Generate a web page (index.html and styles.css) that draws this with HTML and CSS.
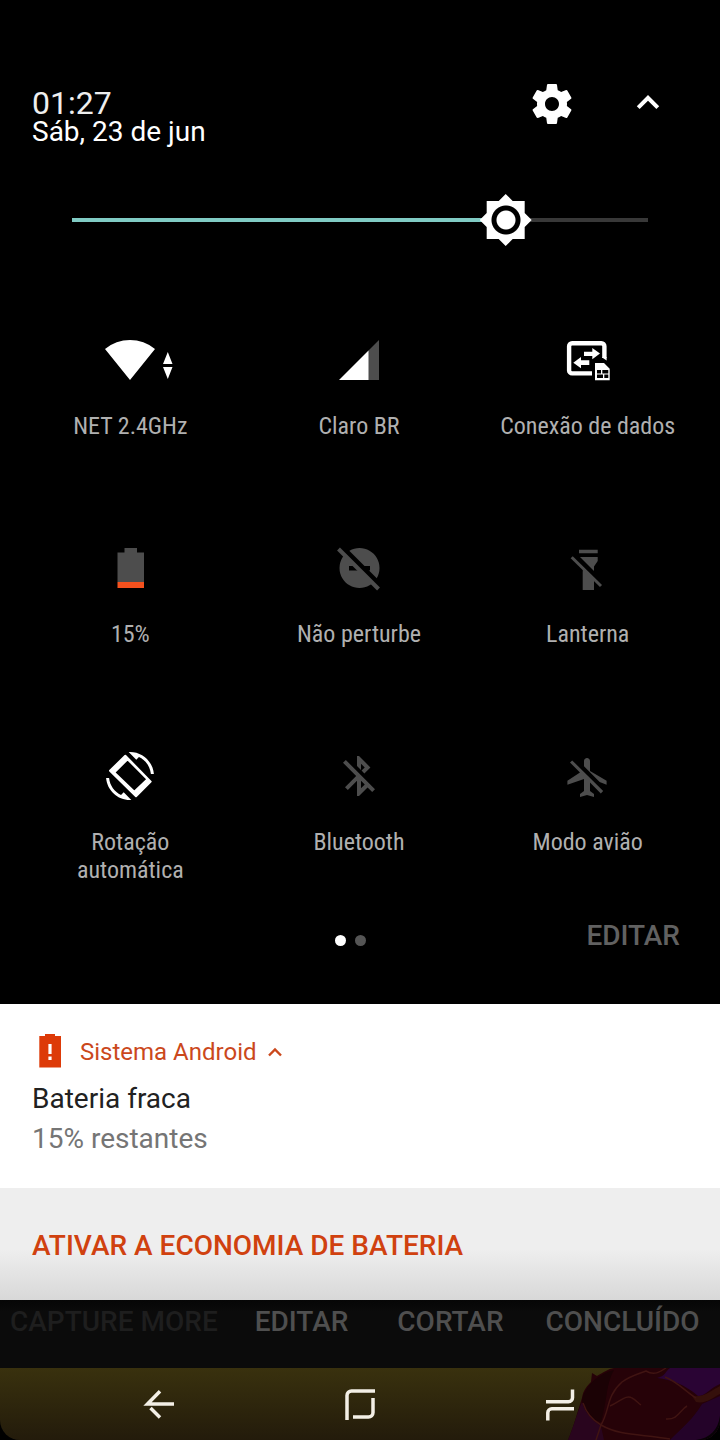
FILE: index.html
```html
<!DOCTYPE html>
<html lang="pt-BR">
<head>
<meta charset="utf-8">
<meta name="viewport" content="width=device-width, initial-scale=1">
<title>Configurações rápidas</title>
<link rel="stylesheet" href="styles.css">
</head>
<body>
<main class="screen">
  <section class="panel">
    <header class="status">
      <div class="clock">
        <time class="time">01:27</time>
        <span class="date">Sáb, 23 de jun</span>
      </div>
      <button class="icon-button" type="button" aria-label="Configurações">
        <svg class="icon" viewBox="0 0 24 24"><path d="M19.43 12.98c.04-.32.07-.64.07-.98s-.03-.66-.07-.98l2.11-1.65c.19-.15.24-.42.12-.64l-2-3.46c-.12-.22-.39-.3-.61-.22l-2.49 1c-.52-.4-1.08-.73-1.69-.98l-.38-2.65C14.46 2.18 14.25 2 14 2h-4c-.25 0-.46.18-.49.42l-.38 2.65c-.61.25-1.17.59-1.69.98l-2.49-1c-.23-.09-.49 0-.61.22l-2 3.46c-.13.22-.07.49.12.64l2.11 1.65c-.04.32-.07.65-.07.98s.03.66.07.98l-2.11 1.65c-.19.15-.24.42-.12.64l2 3.46c.12.22.39.3.61.22l2.49-1c.52.4 1.08.73 1.69.98l.38 2.65c.03.24.24.42.49.42h4c.25 0 .46-.18.49-.42l.38-2.65c.61-.25 1.17-.59 1.69-.98l2.49 1c.23.09.49 0 .61-.22l2-3.46c.12-.22.07-.49-.12-.64l-2.11-1.65zM12 15.5c-1.93 0-3.5-1.57-3.5-3.5s1.57-3.5 3.5-3.5 3.5 1.57 3.5 3.5-1.57 3.5-3.5 3.5z"/></svg>
      </button>
      <button class="icon-button" type="button" aria-label="Recolher">
        <svg class="icon" viewBox="0 0 24 24"><path d="M12 7.500l-5.600 5.600 1.410 1.410L12 10.330l4.190 4.180 1.410-1.410z"/></svg>
      </button>
    </header>

    <input class="brightness" type="range" min="0" max="255" value="192" aria-label="Brilho">

    <div class="tiles">
      <button class="tile" type="button">
        <svg class="icon" viewBox="0 0 48 48"><path d="M24 44L-1 13A39 39 0 0 1 49 13zM61.800 16L66.500 28H57zM57 31H66.500L61.800 43z"/></svg>
        <span>NET 2.4GHz</span>
      </button>
      <button class="tile" type="button">
        <svg class="icon" viewBox="0 0 48 48"><path class="dim" d="M33 15L44 4V44H33z"/><path d="M4 44L33.500 14.500V44z"/></svg>
        <span>Claro BR</span>
      </button>
      <button class="tile" type="button">
        <svg class="icon" viewBox="0 0 48 48"><path d="M28 37.400H8.100a3 3 0 0 1-3-3V10.200a3 3 0 0 1 3-3H37.400a3 3 0 0 1 3 3V22" fill="none" stroke="currentColor" stroke-width="4.400"/><path d="M38.200 21.500L42.600 24.500V21H38.200z"/><path d="M20 15.700H28.300V12L36 17.600 28.300 23.200V20H20zM25.300 24.300H17V21L9.300 26.700 17 32.300V29H25.300z"/><path fill-rule="evenodd" d="M31 27H40L45.700 32.700V44.200H31zM33 34v3.400h4V34zM38.300 34v3.400h6V34zM33 38.600V42h6V38.600zM40.300 38.600V42h4V38.600z"/></svg>
        <span>Conexão de dados</span>
      </button>
      <button class="tile off" type="button">
        <svg class="icon" viewBox="0 0 48 48"><path d="M11.500 8.500H18.500V4H31V8.500H38V38H11.500z"/><path class="low" d="M11.500 38H38V44H11.500z"/></svg>
        <span>15%</span>
      </button>
      <button class="tile off" type="button">
        <svg class="icon" viewBox="0 0 48 48"><path fill-rule="evenodd" d="M24.500 4a20 20 0 1 0 .01 0zM14 22H35V26.400H14z"/><path class="gap" d="M6 2L47 43"/><path class="slash" d="M3.500 5L43.500 45"/></svg>
        <span>Não perturbe</span>
      </button>
      <button class="tile off" type="button">
        <svg class="icon" viewBox="0 0 48 48"><path d="M15 5.700H33.700V9.300H15zM15 13H33.700V17L30 22.500V46H18.700V22.500z"/><path class="gap" d="M9 9.500L41 41.500"/><path d="M6.500 17L9 16 18 25.500 18.700 28V23L12 16.500z" fill="#000"/><path class="slash thin" d="M7.700 13.200L37 42"/></svg>
        <span>Lanterna</span>
      </button>
      <button class="tile wrap" type="button">
        <svg class="icon" viewBox="0 0 48 48"><path d="M32.960 5.040c6.540 3.100 11.220 9.440 11.940 16.960h3C46.880 9.680 36.580 0 24 0l-1.320.06 7.620 7.620zM15.040 42.960C8.500 39.880 3.820 33.520 3.100 26h-3C1.120 38.320 11.420 48 24 48l1.320-.06-7.620-7.620z"/><path fill-rule="evenodd" stroke="currentColor" stroke-width="2" stroke-linejoin="round" d="M19.300 3.700L4 18.800 30 44.300 44.700 29.600zM21.600 7.200L41.500 27.300 28.300 39.700 8.200 20.500z"/></svg>
        <span>Rotação automática</span>
      </button>
      <button class="tile off" type="button">
        <svg class="icon" viewBox="0 0 24 24"><path d="M13 5.830l1.880 1.880-1.600 1.600 1.410 1.410 3.020-3.020L12 2h-1v5.030l2 2v-3.200zM5.410 4L4 5.410 10.590 12 5 17.590 6.410 19 11 14.410V22h1l4.290-4.290 2.300 2.290L20 18.590 5.410 4zM13 18.170v-3.760l1.880 1.880L13 18.170z"/></svg>
        <span>Bluetooth</span>
      </button>
      <button class="tile off" type="button">
        <svg class="icon" viewBox="0 0 24 24"><path d="M13 9.500V4.500c0-.83-.67-1.500-1.500-1.500S10 3.670 10 4.500v2.680l7.830 7.830L21.300 16.400v-2zM3 5.270l4.990 4.990L1.700 14.400v2l8.300-2.900V19.500l-2 1.500V22.500l3.500-1 3.500 1v-1.500L13 19.500v-4.230L18.400 20.700 19.600 19.500 4.100 4.200z"/></svg>
        <span>Modo avião</span>
      </button>
    </div>

    <footer class="panel-footer">
      <div class="dots"><i class="dot current"></i><i class="dot"></i></div>
      <button class="edit" type="button">EDITAR</button>
    </footer>
  </section>

  <article class="notification">
    <div class="source">
      <svg class="source-icon" viewBox="0 0 36 36"><path fill-rule="evenodd" d="M7.300 2H13V0H23V2H29V33.500H7.300zM16.400 10V20H19.600V10zM16.400 22.500V26H19.600V22.500z"/></svg>
      <span>Sistema Android</span>
      <svg class="source-chevron" viewBox="0 0 16 16"><path d="M2 11.500L8 5.500 14 11.500" fill="none" stroke="currentColor" stroke-width="2.400"/></svg>
    </div>
    <h1 class="title">Bateria fraca</h1>
    <p class="detail">15% restantes</p>
  </article>
  <div class="actions">
    <button class="action" type="button">ATIVAR A ECONOMIA DE BATERIA</button>
  </div>

  <div class="toolbar">
    <button class="tool" type="button" disabled>CAPTURE MORE</button>
    <button class="tool edit-tool" type="button">EDITAR</button>
    <button class="tool crop-tool" type="button">CORTAR</button>
    <button class="tool" type="button">CONCLUÍDO</button>
  </div>

  <nav class="navbar">
    <svg class="art" viewBox="0 0 150 72" aria-hidden="true">
      <path fill="#260208" d="M-2 72C4 58 8 42 12 30 13 22 18 17 21 14L22 5 27 8C34 4 38 1 44 0H150V72z"/>
      <path fill="#29051e" d="M-2 72C4 58 8 42 12 34 16 46 22 52 31 58L34 72z"/>
      <path fill="#1b0205" d="M12 32C15 18 28 6 44 2 36 16 38 28 31 54 22 52 14 44 12 32z"/>
      <path fill="#2a0434" d="M87 10C96 8 96 2 100 0H150V16C140 20 136 28 128 28 114 16 102 12 87 10z"/>
      <path fill="#240329" d="M100 72C112 60 124 50 132 36L150 28V72z"/>
      <path fill="#35100b" d="M122 28C134 30 142 22 150 18V26C142 30 136 36 126 34z"/>
      <g fill="none" stroke="#401412" stroke-width="1.500"><path d="M31 57C40 42 36 28 52 14 60 8 68 6 76 3 84 8 90 4 96 0M31 57C50 68 72 66 100 71M13 35C16 44 22 52 31 57L26 72M40 38C50 34 56 26 62 30 66 32 68 35 71 37M117 38C110 42 108 52 96 51M95 9C108 14 116 24 126 30"/></g>
      <path fill="#070305" d="M150 48V72H126C140 70 148 62 150 48z"/>
    </svg>
    <button class="nav-button" type="button" aria-label="Voltar">
      <svg viewBox="0 0 32 32"><path d="M30 16H3.500L16 3.300M6.500 20L16 29.500"/></svg>
    </button>
    <button class="nav-button" type="button" aria-label="Início">
      <svg viewBox="0 0 32 32"><path d="M3 32V7.500a4.500 4.500 0 0 1 4.500-4.500H31M29 10V24.500a4.500 4.500 0 0 1-4.500 4.500H9"/></svg>
    </button>
    <button class="nav-button" type="button" aria-label="Recentes">
      <svg viewBox="0 0 32 32"><path d="M2 13.800H24.500a4 4 0 0 0 4-4V1.500M30 20.800H7.800a4 4 0 0 0-4 4V32.500"/></svg>
    </button>
  </nav>
</main>
</body>
</html>
```
FILE: styles.css
```css
* {
  box-sizing: border-box;
}

body {
  margin: 0;
  background: #000;
  color: #fff;
  font-family: Roboto, "Noto Sans", sans-serif;
}

button {
  margin: 0;
  padding: 0;
  border: 0;
  background: none;
  color: inherit;
  font: inherit;
}

svg {
  display: block;
  overflow: visible;
}

.screen {
  display: flex;
  flex-direction: column;
  min-height: 100vh;
}

.panel {
  display: flex;
  flex-direction: column;
  padding-top: 80px;
}

.status {
  display: flex;
  align-items: flex-start;
  gap: 48px;
  padding: 0 48px 0 32px;
}

.clock {
  display: flex;
  flex: 1;
  flex-direction: column;
  gap: 1px;
  padding-top: 9px;
  line-height: 28px;
}

.time {
  color: #eee;
  font-size: 32px;
}

.date {
  font-size: 28px;
}

.icon {
  width: 48px;
  height: 48px;
  fill: currentColor;
}

/* The control is wider than its line by half a thumb on each side. */
.brightness {
  display: block;
  width: calc(100% - 92px);
  height: 52px;
  margin: 48px 46px 0;
  background: linear-gradient(90deg, #80cbc4 75%, #383838 75%) center / calc(100% - 52px) 4px no-repeat;
  appearance: none;
}

.brightness::-webkit-slider-thumb {
  width: 52px;
  height: 52px;
  background: radial-gradient(circle, #fff 9px, #000 10px, #000 14px, #fff 15px);
  clip-path: polygon(26px 0, 33px 7px, 45px 7px, 45px 19px, 52px 26px, 45px 33px, 45px 45px, 33px 45px, 26px 52px, 19px 45px, 7px 45px, 7px 33px, 0 26px, 7px 19px, 7px 7px, 19px 7px);
  appearance: none;
}

.tiles {
  display: grid;
  grid-template-columns: repeat(3, minmax(0, 1fr));
  row-gap: 104px;
  padding: 90px 18px 0 16px;
}

.tile {
  display: flex;
  flex-direction: column;
  align-items: center;
  gap: 28px;
  font-family: "Roboto Condensed", "Liberation Sans Narrow", Roboto, sans-serif;
  font-size: 24px;
  line-height: 28px;
  white-space: nowrap;
}

.tile.wrap {
  padding: 0 40px;
  white-space: normal;
}

.tile span {
  color: #b0b0b0;
}

.off .icon {
  color: #4d4d4d;
}

.dim {
  fill: #4d4d4d;
}

.low {
  fill: #f4511e;
}

.gap {
  fill: none;
  stroke: #000;
  stroke-width: 5;
}

.slash {
  fill: none;
  stroke: currentColor;
  stroke-width: 4;
}

.thin {
  stroke-width: 3;
}

.panel-footer {
  display: grid;
  grid-template-columns: 1fr auto 1fr;
  align-items: center;
  padding: 36px 40px 44px;
}

.dots {
  display: flex;
  grid-column: 2;
  gap: 9px;
  padding-right: 20px;
}

.dot {
  width: 11px;
  height: 11px;
  border-radius: 50%;
  background: #555;
}

.dot.current {
  background: #fff;
}

.edit {
  justify-self: end;
  padding-bottom: 8px;
  color: #616161;
  font-size: 28px;
  font-weight: 500;
  line-height: 32px;
}

.notification {
  padding: 30px 32px 29px;
  background: #fff;
  color: #212121;
}

.source {
  display: flex;
  align-items: center;
  gap: 12px;
  margin-bottom: 9px;
  color: #cb481c;
  font-size: 24px;
  line-height: 36px;
}

.source-icon {
  width: 36px;
  height: 36px;
  fill: #dd3a08;
}

.source-chevron {
  width: 16px;
  height: 16px;
  margin-left: -2px;
}

.title,
.detail {
  margin: 0;
  font-size: 28px;
  font-weight: 400;
  line-height: 40px;
}

.detail {
  color: #757575;
}

.actions {
  padding: 42px 32px 38px;
  background: linear-gradient(#eee 55%, #d8d8d8);
}

.action {
  display: block;
  color: #d0410f;
  font-size: 28px;
  font-weight: 500;
  line-height: 32px;
}

.toolbar {
  display: flex;
  gap: 37px;
  padding: 6px 10px 30px;
  background: linear-gradient(#060606, #0b0b0b 12px);
  color: #4f4f4f;
}

.tool {
  font-size: 28px;
  font-weight: 500;
  line-height: 32px;
  white-space: nowrap;
}

.tool:disabled {
  color: #1e1e1e;
}

.edit-tool {
  padding-right: 12px;
}

.crop-tool {
  padding-right: 5px;
}

.navbar {
  position: relative;
  display: flex;
  flex: 1;
  align-items: center;
  justify-content: center;
  gap: 168px;
  min-height: 72px;
  overflow: hidden;
  border-radius: 0 0 20px 20px;
  background: linear-gradient(#39310e, #231b0b);
}

/* Wallpaper figure seen behind the navigation bar. */
.art {
  position: absolute;
  right: 0;
  bottom: 0;
  width: 150px;
  height: 72px;
}

.nav-button {
  position: relative;
}

.nav-button svg {
  width: 32px;
  height: 32px;
  fill: none;
  stroke: #f3efe6;
  stroke-width: 3.500;
}
```
